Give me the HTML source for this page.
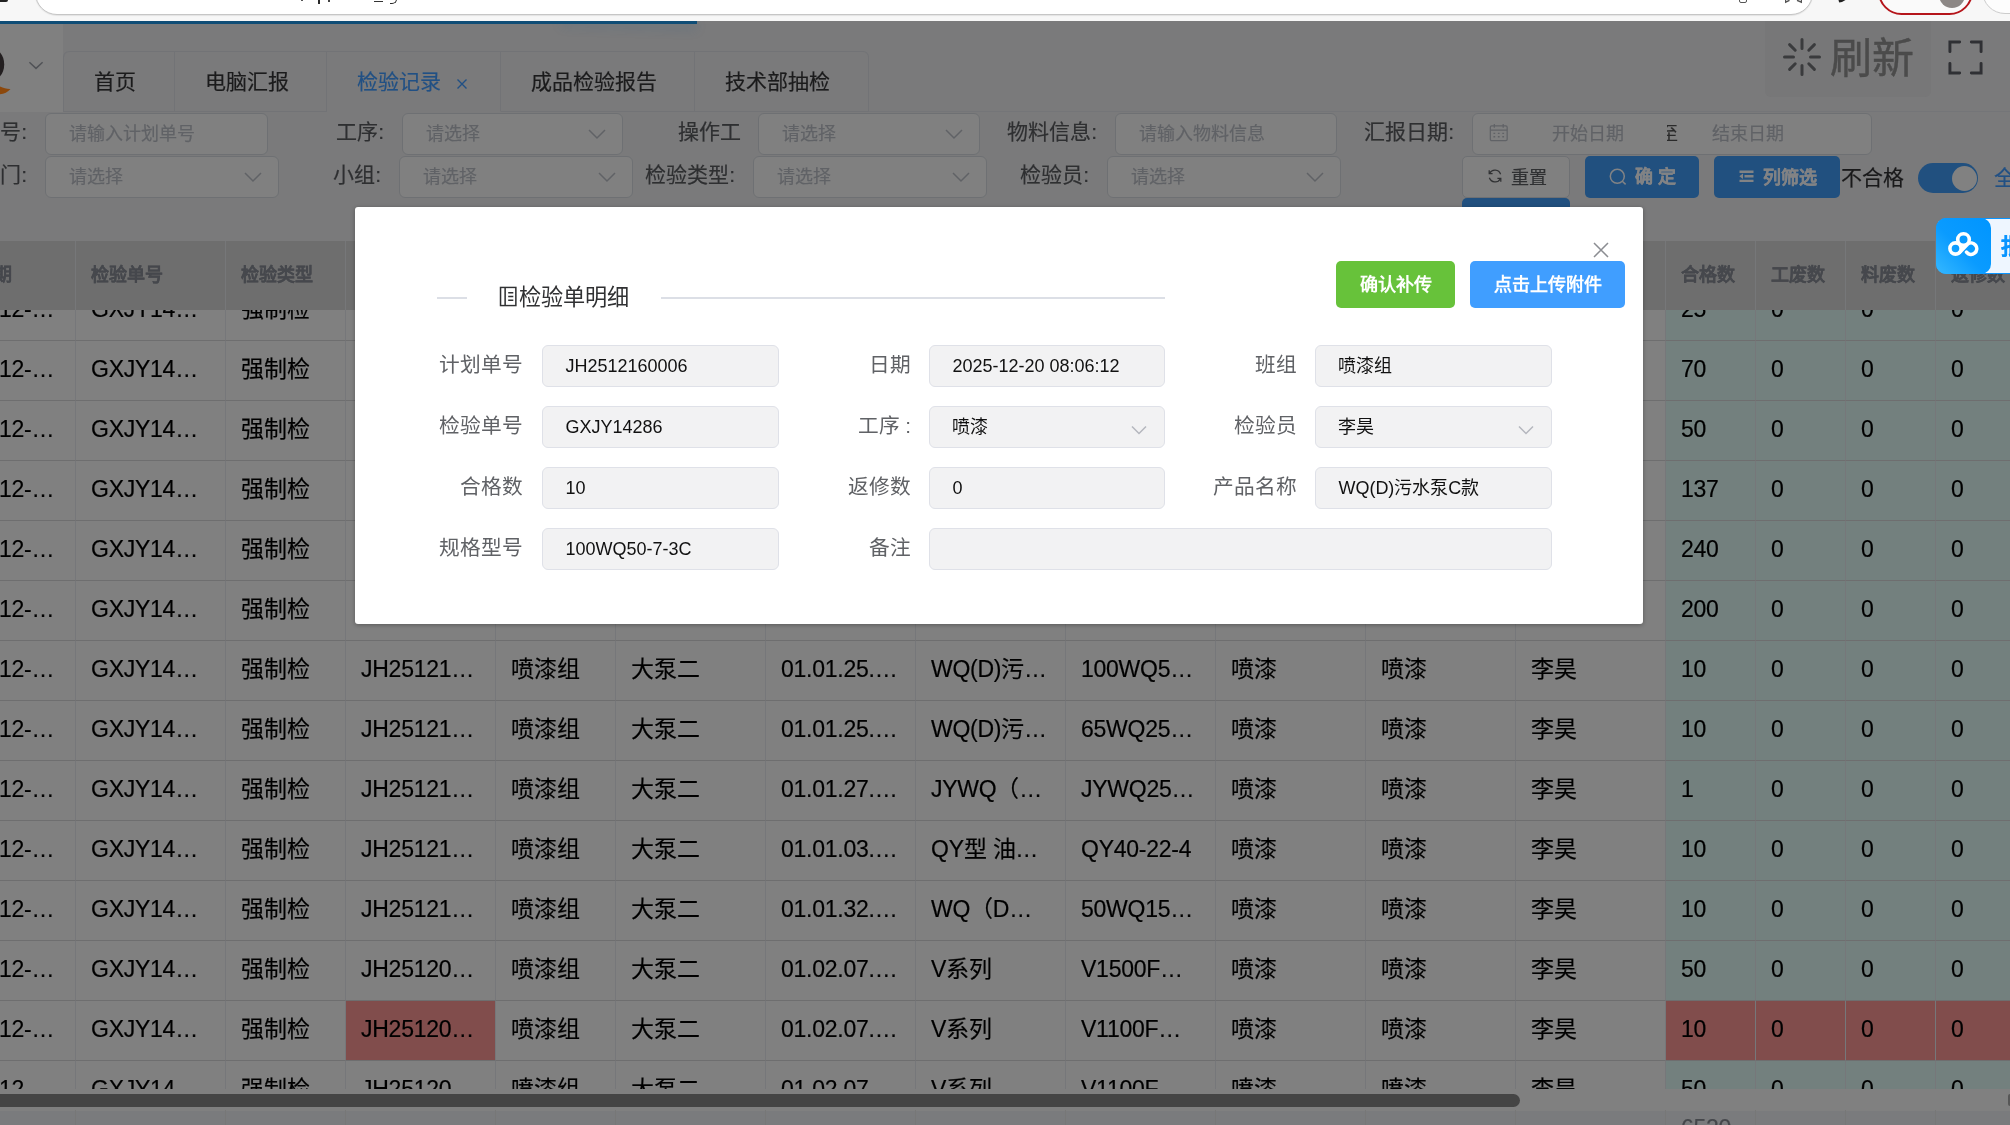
<!DOCTYPE html>
<html lang="zh-CN">
<head>
<meta charset="utf-8">
<title>检验记录</title>
<style>
*{box-sizing:border-box;margin:0;padding:0}
html,body{width:2010px;height:1125px;overflow:hidden;background:#7a7a7b}
body{font-family:"Liberation Sans",sans-serif;position:relative;color:#111;-webkit-text-stroke:0.18px}
#root{position:absolute;left:0;top:0;width:2010px;height:1125px;overflow:hidden;will-change:transform}
.abs{position:absolute}
.t{position:absolute;white-space:nowrap;line-height:1}
#chrome{left:0;top:0;width:2010px;height:21px;background:#f7f7f7;z-index:5;overflow:hidden}
#url{left:35px;top:-30px;width:1778px;height:44.5px;background:#fff;border:1.5px solid #c6c6c6;border-radius:22px;box-shadow:0 1px 1px rgba(0,0,0,.08)}
#prog{left:0;top:21px;width:697px;height:3px;background:#0f4d76;z-index:6}
#progend{left:560px;top:20px;width:134px;height:3px;box-shadow:2px 5px 11px rgba(50,100,140,.42);transform:rotate(1.5deg);transform-origin:100% 50%}
#side{left:0;top:24px;width:63px;height:88px;background:#808080}
.tab{position:absolute;top:51px;height:61px;border:1px solid #727376;border-left:none;font-size:21px;line-height:60px;text-align:left;padding-left:30px;color:#1b1b1c;white-space:nowrap}
.inp{position:absolute;height:41.5px;border:1px solid #6e7073;border-radius:6px;background:#808080}
.ph{position:absolute;font-size:18px;line-height:41px;color:#606266;white-space:nowrap;top:0}
.lab{position:absolute;font-size:21px;line-height:38px;color:#2e2f31;white-space:nowrap}
.chev{position:absolute;top:14px;width:18px;height:12px}
.th{position:absolute;top:241px;height:69px;background:#6e6e6e;border-right:1px solid #767779;font-size:18px;font-weight:bold;-webkit-text-stroke:0.12px #46484d;color:#46484d;line-height:68.6px;padding-left:15px;white-space:nowrap;overflow:hidden}
.td{position:absolute;height:60px;border-right:1px solid #76777a;border-bottom:1px solid #6e6e6f;font-size:23px;letter-spacing:-0.25px;line-height:57px;padding-left:15px;color:#000;white-space:nowrap;overflow:hidden}
.g{background:#73807e}
.r{background:#814d4c}
#dlg{-webkit-text-stroke:0;left:355px;top:207px;width:1288px;height:417px;background:#fff;border-radius:3px;box-shadow:0 1px 4px rgba(0,0,0,.3)}
.dl{position:absolute;font-size:20.7px;line-height:40px;color:#606266;white-space:nowrap;text-align:right;width:160px}
.di{position:absolute;height:42px;border:1px solid #dfe1e8;border-radius:6px;background:#f2f2f3;font-size:18px;line-height:40px;color:#111;padding-left:22.4px;white-space:nowrap;overflow:hidden}
.btn{position:absolute;border-radius:5px;color:#fff;font-weight:bold;font-size:18px;text-align:center;white-space:nowrap}
</style>
</head>
<body>
<div id="root">

<div id="chrome" class="abs">
<div id="url" class="abs"></div>
<div class="abs" style="left:301px;top:0;width:1.6px;height:1.2px;background:#555"></div>
<div class="abs" style="left:318px;top:0;width:2px;height:4px;background:#2a2a2a"></div>
<div class="abs" style="left:328px;top:0;width:1.8px;height:1.6px;background:#444"></div>
<div class="abs" style="left:374px;top:0.8px;width:9.3px;height:1.6px;background:#333"></div>
<div class="abs" style="left:389.5px;top:-3px;width:7px;height:6.6px;border:1.8px solid #2a2a2a;border-top:none;border-left:none;border-radius:0 0 5px 0"></div>
<div class="abs" style="left:0;top:0;width:8px;height:2px;background:#222;border-radius:0 0 3px 0"></div>
<div class="abs" style="left:1739px;top:-4px;width:8px;height:7px;border:1.5px solid #555;border-radius:2px"></div>
<svg class="abs" style="left:1785px;top:0" width="17" height="4" viewBox="0 0 17 4"><path d="M0.5 0V2.2L4.5 0.3M16.5 0V2.2L12 0.3" fill="none" stroke="#555" stroke-width="1.4"/></svg>
<svg class="abs" style="left:1838px;top:0" width="9" height="4" viewBox="0 0 9 4"><path d="M0.5 0L1.2 2.4L4 2L7.5 0Z" fill="#222"/></svg>
<div class="abs" style="left:1878px;top:-32px;width:94.5px;height:47px;border:2px solid #b5151b;border-radius:23.5px;background:#fafafa;overflow:hidden"><div class="abs" style="left:58.5px;top:10.5px;width:26.5px;height:27px;border-radius:13.5px;background:#8d8886"></div></div>
<div class="abs" style="left:1982px;top:-32px;width:94px;height:46px;border:1px solid #ccc;border-radius:23px;background:#fdfdfd"></div>
</div>
<div id="progend" class="abs"></div><div id="prog" class="abs"></div>
<div id="side" class="abs"></div>
<svg class="abs" style="left:0;top:48px" width="48" height="50" viewBox="0 0 48 50"><ellipse cx="-9.8" cy="16.4" rx="14" ry="16.7" fill="#231f20"/><path d="M0 38.6C3.5 40.4 7 41 10.5 40.9C8 44 4 46 0 46.2Z" fill="#8c480c"/><path d="M29.4 14.2L36 20.4L42.6 14.2" fill="none" stroke="#505256" stroke-width="1.45"/></svg>
<div class="abs" style="left:63px;top:51px;width:806px;height:61px;border-left:1px solid #727376;border-radius:6px 6px 0 0"></div>
<div class="tab" style="left:64px;width:111px;border-top-left-radius:6px;">首页</div>
<div class="tab" style="left:175px;width:152px;">电脑汇报</div>
<div class="tab" style="left:327px;width:174px;color:#215084;border-bottom-color:#7a7a7b">检验记录<svg style="position:absolute;left:128.7px;top:26px" width="12" height="12" viewBox="0 0 12 12"><path d="M1.5 1.5L10.5 10.5M10.5 1.5L1.5 10.5" stroke="#215084" stroke-width="1.4" fill="none"/></svg></div>
<div class="tab" style="left:501px;width:194px;">成品检验报告</div>
<div class="tab" style="left:695px;width:174px;border-top-right-radius:6px;">技术部抽检</div>
<div class="abs" style="left:869px;top:111px;width:1141px;height:1px;background:#747578"></div>
<div class="abs" style="left:1765px;top:14px;width:166px;height:82.5px;border-radius:6px;background:#777778"></div>
<svg class="abs" style="left:1782px;top:37px" width="40" height="40" viewBox="0 0 40 40"><g stroke="#3a3b3d" stroke-width="3" stroke-linecap="round">
<path d="M20 2.5V11.5M20 28.5V37.5M2.5 20H11.5M28.5 20H37.5M7.6 7.6L13.2 13.2M26.8 26.8L32.4 32.4M7.6 32.4L13.2 26.8M26.8 13.2L32.4 7.6"/></g></svg>
<div class="t" style="left:1830px;top:37.5px;font-size:42px;font-weight:500;-webkit-text-stroke:0.45px #4b4b4b;color:#4b4b4b">刷新</div>
<svg class="abs" style="left:1946.5px;top:38.5px" width="37" height="37" viewBox="0 0 38 38"><g stroke="#2f3034" stroke-width="3" fill="none" stroke-linecap="round" stroke-linejoin="miter">
<path d="M3 13V3H13M25 3H35V13M35 25V35H25M13 35H3V25"/></g></svg>
<div class="lab" style="right:1983px;top:113px">号:</div>
<div class="inp" style="left:45px;top:113px;width:223px"><span class="ph" style="left:23px">请输入计划单号</span></div>
<div class="lab" style="right:1626px;top:113px">工序:</div>
<div class="inp" style="left:402px;top:113px;width:221px"><span class="ph" style="left:23px">请选择</span><svg class="chev" style="left:185px" viewBox="0 0 18 12"><path d="M1 2L9 10L17 2" fill="none" stroke="#606266" stroke-width="1.5"/></svg></div>
<div class="lab" style="right:1269px;top:113px">操作工</div>
<div class="inp" style="left:758px;top:113px;width:222px"><span class="ph" style="left:23px">请选择</span><svg class="chev" style="left:186px" viewBox="0 0 18 12"><path d="M1 2L9 10L17 2" fill="none" stroke="#606266" stroke-width="1.5"/></svg></div>
<div class="lab" style="right:913px;top:113px">物料信息:</div>
<div class="inp" style="left:1115px;top:113px;width:222px"><span class="ph" style="left:23px">请输入物料信息</span></div>
<div class="lab" style="right:556px;top:113px">汇报日期:</div>
<div class="inp" style="left:1472px;top:113px;width:400px"><svg style="position:absolute;left:16px;top:9px" width="19.5" height="19" viewBox="0 0 22 20" preserveAspectRatio="none"><g fill="none" stroke="#606266" stroke-width="1.4"><rect x="1.5" y="3" width="19" height="15.5" rx="1.5"/><path d="M1.5 7.5H20.5M6 1V5M16 1V5M5 11H7M10 11H12M15 11H17M5 14.5H7M10 14.5H12M15 14.5H17"/></g></svg><span class="ph" style="left:79px">开始日期</span><span class="abs" style="left:194px;top:10px;width:12px;height:21px;overflow:hidden"><span class="t" style="left:-7px;top:0;font-size:18px;line-height:21px;color:#2a2a2a">至</span></span><span class="ph" style="left:239px">结束日期</span></div>
<div class="lab" style="right:1983px;top:156px">门:</div>
<div class="inp" style="left:45px;top:156px;width:234px"><span class="ph" style="left:23px">请选择</span><svg class="chev" style="left:198px" viewBox="0 0 18 12"><path d="M1 2L9 10L17 2" fill="none" stroke="#606266" stroke-width="1.5"/></svg></div>
<div class="lab" style="right:1629px;top:156px">小组:</div>
<div class="inp" style="left:399px;top:156px;width:234px"><span class="ph" style="left:23px">请选择</span><svg class="chev" style="left:198px" viewBox="0 0 18 12"><path d="M1 2L9 10L17 2" fill="none" stroke="#606266" stroke-width="1.5"/></svg></div>
<div class="lab" style="right:1275px;top:156px">检验类型:</div>
<div class="inp" style="left:753px;top:156px;width:234px"><span class="ph" style="left:23px">请选择</span><svg class="chev" style="left:198px" viewBox="0 0 18 12"><path d="M1 2L9 10L17 2" fill="none" stroke="#606266" stroke-width="1.5"/></svg></div>
<div class="lab" style="right:921px;top:156px">检验员:</div>
<div class="inp" style="left:1107px;top:156px;width:234px"><span class="ph" style="left:23px">请选择</span><svg class="chev" style="left:198px" viewBox="0 0 18 12"><path d="M1 2L9 10L17 2" fill="none" stroke="#606266" stroke-width="1.5"/></svg></div>
<div class="abs" style="left:1462px;top:156px;width:108px;height:41.5px;border:1px solid #6e7073;border-radius:5px;background:#808080"><svg style="position:absolute;left:23.5px;top:11.3px" width="16" height="16" viewBox="0 0 16 16"><g fill="none" stroke="#303133" stroke-width="1.25"><path d="M13.6 6.2A6 6 0 0 0 2.6 5.2M2.4 9.8A6 6 0 0 0 13.4 10.8"/><path d="M2.2 2.2V5.6H5.6M13.8 13.8V10.4H10.4"/></g></svg><span class="t" style="left:48px;top:11.5px;font-size:18px;font-weight:500;color:#2f3032">重置</span></div>
<div class="abs" style="left:1462px;top:198px;width:108px;height:30px;border-radius:5px;background:#21507f"></div>
<div class="abs" style="left:1585px;top:156px;width:114px;height:42px;border-radius:5px;background:#21507f"><svg style="position:absolute;left:23px;top:11px" width="20" height="20" viewBox="0 0 20 20"><g fill="none" stroke="#828385" stroke-width="1.5"><circle cx="9.3" cy="9.3" r="7"/><path d="M14.3 14.3L17.6 17.4"/></g></svg><span class="t" style="left:49.5px;top:12px;font-size:18px;font-weight:bold;color:#828385">确 定</span></div>
<div class="abs" style="left:1714px;top:156px;width:126px;height:42px;border-radius:5px;background:#21507f"><svg style="position:absolute;left:25px;top:14px" width="15" height="13" viewBox="0 0 15 13"><g fill="none" stroke="#828385" stroke-width="2.4"><path d="M0.5 1.7H14.5M5.5 6.3H14.5M0.5 10.9H14.5"/></g><path d="M0.3 6.3L4 3.6V9Z" fill="#828385"/></svg><span class="t" style="left:49px;top:12.5px;font-size:18px;font-weight:bold;color:#828385">列筛选</span></div>
<div class="t" style="left:1841px;top:167px;font-size:21px;color:#19191a">不合格</div>
<div class="abs" style="left:1918px;top:163px;width:60px;height:30px;border-radius:15px;background:#21507f"><div class="abs" style="left:33.5px;top:2.5px;width:25px;height:25px;border-radius:13px;background:#818181"></div></div>
<div class="t" style="left:1993.5px;top:166.5px;font-size:21px;color:#215084">全部</div>
<div class="abs" style="left:0;top:241px;width:2010px;height:884px;background:#808080"></div>
<div class="td" style="left:0;top:281px;width:76px;padding-left:0;text-indent:-1px">12-…</div>
<div class="td" style="left:76px;top:281px;width:150px">GXJY14…</div>
<div class="td" style="left:226px;top:281px;width:120px">强制检</div>
<div class="td" style="left:346px;top:281px;width:150px">JH25121…</div>
<div class="td" style="left:496px;top:281px;width:120px">喷漆组</div>
<div class="td" style="left:616px;top:281px;width:150px">大泵二</div>
<div class="td" style="left:766px;top:281px;width:150px">01.01.25.…</div>
<div class="td" style="left:916px;top:281px;width:150px">WQ(D)污…</div>
<div class="td" style="left:1066px;top:281px;width:150px">100WQ5…</div>
<div class="td" style="left:1216px;top:281px;width:150px">喷漆</div>
<div class="td" style="left:1366px;top:281px;width:150px">喷漆</div>
<div class="td" style="left:1516px;top:281px;width:150px">李昊</div>
<div class="td g" style="left:1666px;top:281px;width:90px">25</div>
<div class="td g" style="left:1756px;top:281px;width:90px">0</div>
<div class="td g" style="left:1846px;top:281px;width:90px">0</div>
<div class="td g" style="left:1936px;top:281px;width:90px">0</div>
<div class="td" style="left:0;top:341px;width:76px;padding-left:0;text-indent:-1px">12-…</div>
<div class="td" style="left:76px;top:341px;width:150px">GXJY14…</div>
<div class="td" style="left:226px;top:341px;width:120px">强制检</div>
<div class="td" style="left:346px;top:341px;width:150px">JH25121…</div>
<div class="td" style="left:496px;top:341px;width:120px">喷漆组</div>
<div class="td" style="left:616px;top:341px;width:150px">大泵二</div>
<div class="td" style="left:766px;top:341px;width:150px">01.01.25.…</div>
<div class="td" style="left:916px;top:341px;width:150px">WQ(D)污…</div>
<div class="td" style="left:1066px;top:341px;width:150px">100WQ5…</div>
<div class="td" style="left:1216px;top:341px;width:150px">喷漆</div>
<div class="td" style="left:1366px;top:341px;width:150px">喷漆</div>
<div class="td" style="left:1516px;top:341px;width:150px">李昊</div>
<div class="td g" style="left:1666px;top:341px;width:90px">70</div>
<div class="td g" style="left:1756px;top:341px;width:90px">0</div>
<div class="td g" style="left:1846px;top:341px;width:90px">0</div>
<div class="td g" style="left:1936px;top:341px;width:90px">0</div>
<div class="td" style="left:0;top:401px;width:76px;padding-left:0;text-indent:-1px">12-…</div>
<div class="td" style="left:76px;top:401px;width:150px">GXJY14…</div>
<div class="td" style="left:226px;top:401px;width:120px">强制检</div>
<div class="td" style="left:346px;top:401px;width:150px">JH25121…</div>
<div class="td" style="left:496px;top:401px;width:120px">喷漆组</div>
<div class="td" style="left:616px;top:401px;width:150px">大泵二</div>
<div class="td" style="left:766px;top:401px;width:150px">01.01.25.…</div>
<div class="td" style="left:916px;top:401px;width:150px">WQ(D)污…</div>
<div class="td" style="left:1066px;top:401px;width:150px">100WQ5…</div>
<div class="td" style="left:1216px;top:401px;width:150px">喷漆</div>
<div class="td" style="left:1366px;top:401px;width:150px">喷漆</div>
<div class="td" style="left:1516px;top:401px;width:150px">李昊</div>
<div class="td g" style="left:1666px;top:401px;width:90px">50</div>
<div class="td g" style="left:1756px;top:401px;width:90px">0</div>
<div class="td g" style="left:1846px;top:401px;width:90px">0</div>
<div class="td g" style="left:1936px;top:401px;width:90px">0</div>
<div class="td" style="left:0;top:461px;width:76px;padding-left:0;text-indent:-1px">12-…</div>
<div class="td" style="left:76px;top:461px;width:150px">GXJY14…</div>
<div class="td" style="left:226px;top:461px;width:120px">强制检</div>
<div class="td" style="left:346px;top:461px;width:150px">JH25121…</div>
<div class="td" style="left:496px;top:461px;width:120px">喷漆组</div>
<div class="td" style="left:616px;top:461px;width:150px">大泵二</div>
<div class="td" style="left:766px;top:461px;width:150px">01.01.25.…</div>
<div class="td" style="left:916px;top:461px;width:150px">WQ(D)污…</div>
<div class="td" style="left:1066px;top:461px;width:150px">100WQ5…</div>
<div class="td" style="left:1216px;top:461px;width:150px">喷漆</div>
<div class="td" style="left:1366px;top:461px;width:150px">喷漆</div>
<div class="td" style="left:1516px;top:461px;width:150px">李昊</div>
<div class="td g" style="left:1666px;top:461px;width:90px">137</div>
<div class="td g" style="left:1756px;top:461px;width:90px">0</div>
<div class="td g" style="left:1846px;top:461px;width:90px">0</div>
<div class="td g" style="left:1936px;top:461px;width:90px">0</div>
<div class="td" style="left:0;top:521px;width:76px;padding-left:0;text-indent:-1px">12-…</div>
<div class="td" style="left:76px;top:521px;width:150px">GXJY14…</div>
<div class="td" style="left:226px;top:521px;width:120px">强制检</div>
<div class="td" style="left:346px;top:521px;width:150px">JH25121…</div>
<div class="td" style="left:496px;top:521px;width:120px">喷漆组</div>
<div class="td" style="left:616px;top:521px;width:150px">大泵二</div>
<div class="td" style="left:766px;top:521px;width:150px">01.01.25.…</div>
<div class="td" style="left:916px;top:521px;width:150px">WQ(D)污…</div>
<div class="td" style="left:1066px;top:521px;width:150px">100WQ5…</div>
<div class="td" style="left:1216px;top:521px;width:150px">喷漆</div>
<div class="td" style="left:1366px;top:521px;width:150px">喷漆</div>
<div class="td" style="left:1516px;top:521px;width:150px">李昊</div>
<div class="td g" style="left:1666px;top:521px;width:90px">240</div>
<div class="td g" style="left:1756px;top:521px;width:90px">0</div>
<div class="td g" style="left:1846px;top:521px;width:90px">0</div>
<div class="td g" style="left:1936px;top:521px;width:90px">0</div>
<div class="td" style="left:0;top:581px;width:76px;padding-left:0;text-indent:-1px">12-…</div>
<div class="td" style="left:76px;top:581px;width:150px">GXJY14…</div>
<div class="td" style="left:226px;top:581px;width:120px">强制检</div>
<div class="td" style="left:346px;top:581px;width:150px">JH25121…</div>
<div class="td" style="left:496px;top:581px;width:120px">喷漆组</div>
<div class="td" style="left:616px;top:581px;width:150px">大泵二</div>
<div class="td" style="left:766px;top:581px;width:150px">01.01.25.…</div>
<div class="td" style="left:916px;top:581px;width:150px">WQ(D)污…</div>
<div class="td" style="left:1066px;top:581px;width:150px">100WQ5…</div>
<div class="td" style="left:1216px;top:581px;width:150px">喷漆</div>
<div class="td" style="left:1366px;top:581px;width:150px">喷漆</div>
<div class="td" style="left:1516px;top:581px;width:150px">李昊</div>
<div class="td g" style="left:1666px;top:581px;width:90px">200</div>
<div class="td g" style="left:1756px;top:581px;width:90px">0</div>
<div class="td g" style="left:1846px;top:581px;width:90px">0</div>
<div class="td g" style="left:1936px;top:581px;width:90px">0</div>
<div class="td" style="left:0;top:641px;width:76px;padding-left:0;text-indent:-1px">12-…</div>
<div class="td" style="left:76px;top:641px;width:150px">GXJY14…</div>
<div class="td" style="left:226px;top:641px;width:120px">强制检</div>
<div class="td" style="left:346px;top:641px;width:150px">JH25121…</div>
<div class="td" style="left:496px;top:641px;width:120px">喷漆组</div>
<div class="td" style="left:616px;top:641px;width:150px">大泵二</div>
<div class="td" style="left:766px;top:641px;width:150px">01.01.25.…</div>
<div class="td" style="left:916px;top:641px;width:150px">WQ(D)污…</div>
<div class="td" style="left:1066px;top:641px;width:150px">100WQ5…</div>
<div class="td" style="left:1216px;top:641px;width:150px">喷漆</div>
<div class="td" style="left:1366px;top:641px;width:150px">喷漆</div>
<div class="td" style="left:1516px;top:641px;width:150px">李昊</div>
<div class="td g" style="left:1666px;top:641px;width:90px">10</div>
<div class="td g" style="left:1756px;top:641px;width:90px">0</div>
<div class="td g" style="left:1846px;top:641px;width:90px">0</div>
<div class="td g" style="left:1936px;top:641px;width:90px">0</div>
<div class="td" style="left:0;top:701px;width:76px;padding-left:0;text-indent:-1px">12-…</div>
<div class="td" style="left:76px;top:701px;width:150px">GXJY14…</div>
<div class="td" style="left:226px;top:701px;width:120px">强制检</div>
<div class="td" style="left:346px;top:701px;width:150px">JH25121…</div>
<div class="td" style="left:496px;top:701px;width:120px">喷漆组</div>
<div class="td" style="left:616px;top:701px;width:150px">大泵二</div>
<div class="td" style="left:766px;top:701px;width:150px">01.01.25.…</div>
<div class="td" style="left:916px;top:701px;width:150px">WQ(D)污…</div>
<div class="td" style="left:1066px;top:701px;width:150px">65WQ25…</div>
<div class="td" style="left:1216px;top:701px;width:150px">喷漆</div>
<div class="td" style="left:1366px;top:701px;width:150px">喷漆</div>
<div class="td" style="left:1516px;top:701px;width:150px">李昊</div>
<div class="td g" style="left:1666px;top:701px;width:90px">10</div>
<div class="td g" style="left:1756px;top:701px;width:90px">0</div>
<div class="td g" style="left:1846px;top:701px;width:90px">0</div>
<div class="td g" style="left:1936px;top:701px;width:90px">0</div>
<div class="td" style="left:0;top:761px;width:76px;padding-left:0;text-indent:-1px">12-…</div>
<div class="td" style="left:76px;top:761px;width:150px">GXJY14…</div>
<div class="td" style="left:226px;top:761px;width:120px">强制检</div>
<div class="td" style="left:346px;top:761px;width:150px">JH25121…</div>
<div class="td" style="left:496px;top:761px;width:120px">喷漆组</div>
<div class="td" style="left:616px;top:761px;width:150px">大泵二</div>
<div class="td" style="left:766px;top:761px;width:150px">01.01.27.…</div>
<div class="td" style="left:916px;top:761px;width:150px">JYWQ（…</div>
<div class="td" style="left:1066px;top:761px;width:150px">JYWQ25…</div>
<div class="td" style="left:1216px;top:761px;width:150px">喷漆</div>
<div class="td" style="left:1366px;top:761px;width:150px">喷漆</div>
<div class="td" style="left:1516px;top:761px;width:150px">李昊</div>
<div class="td g" style="left:1666px;top:761px;width:90px">1</div>
<div class="td g" style="left:1756px;top:761px;width:90px">0</div>
<div class="td g" style="left:1846px;top:761px;width:90px">0</div>
<div class="td g" style="left:1936px;top:761px;width:90px">0</div>
<div class="td" style="left:0;top:821px;width:76px;padding-left:0;text-indent:-1px">12-…</div>
<div class="td" style="left:76px;top:821px;width:150px">GXJY14…</div>
<div class="td" style="left:226px;top:821px;width:120px">强制检</div>
<div class="td" style="left:346px;top:821px;width:150px">JH25121…</div>
<div class="td" style="left:496px;top:821px;width:120px">喷漆组</div>
<div class="td" style="left:616px;top:821px;width:150px">大泵二</div>
<div class="td" style="left:766px;top:821px;width:150px">01.01.03.…</div>
<div class="td" style="left:916px;top:821px;width:150px">QY型 油…</div>
<div class="td" style="left:1066px;top:821px;width:150px">QY40-22-4</div>
<div class="td" style="left:1216px;top:821px;width:150px">喷漆</div>
<div class="td" style="left:1366px;top:821px;width:150px">喷漆</div>
<div class="td" style="left:1516px;top:821px;width:150px">李昊</div>
<div class="td g" style="left:1666px;top:821px;width:90px">10</div>
<div class="td g" style="left:1756px;top:821px;width:90px">0</div>
<div class="td g" style="left:1846px;top:821px;width:90px">0</div>
<div class="td g" style="left:1936px;top:821px;width:90px">0</div>
<div class="td" style="left:0;top:881px;width:76px;padding-left:0;text-indent:-1px">12-…</div>
<div class="td" style="left:76px;top:881px;width:150px">GXJY14…</div>
<div class="td" style="left:226px;top:881px;width:120px">强制检</div>
<div class="td" style="left:346px;top:881px;width:150px">JH25121…</div>
<div class="td" style="left:496px;top:881px;width:120px">喷漆组</div>
<div class="td" style="left:616px;top:881px;width:150px">大泵二</div>
<div class="td" style="left:766px;top:881px;width:150px">01.01.32.…</div>
<div class="td" style="left:916px;top:881px;width:150px">WQ（D…</div>
<div class="td" style="left:1066px;top:881px;width:150px">50WQ15…</div>
<div class="td" style="left:1216px;top:881px;width:150px">喷漆</div>
<div class="td" style="left:1366px;top:881px;width:150px">喷漆</div>
<div class="td" style="left:1516px;top:881px;width:150px">李昊</div>
<div class="td g" style="left:1666px;top:881px;width:90px">10</div>
<div class="td g" style="left:1756px;top:881px;width:90px">0</div>
<div class="td g" style="left:1846px;top:881px;width:90px">0</div>
<div class="td g" style="left:1936px;top:881px;width:90px">0</div>
<div class="td" style="left:0;top:941px;width:76px;padding-left:0;text-indent:-1px">12-…</div>
<div class="td" style="left:76px;top:941px;width:150px">GXJY14…</div>
<div class="td" style="left:226px;top:941px;width:120px">强制检</div>
<div class="td" style="left:346px;top:941px;width:150px">JH25120…</div>
<div class="td" style="left:496px;top:941px;width:120px">喷漆组</div>
<div class="td" style="left:616px;top:941px;width:150px">大泵二</div>
<div class="td" style="left:766px;top:941px;width:150px">01.02.07.…</div>
<div class="td" style="left:916px;top:941px;width:150px">V系列</div>
<div class="td" style="left:1066px;top:941px;width:150px">V1500F…</div>
<div class="td" style="left:1216px;top:941px;width:150px">喷漆</div>
<div class="td" style="left:1366px;top:941px;width:150px">喷漆</div>
<div class="td" style="left:1516px;top:941px;width:150px">李昊</div>
<div class="td g" style="left:1666px;top:941px;width:90px">50</div>
<div class="td g" style="left:1756px;top:941px;width:90px">0</div>
<div class="td g" style="left:1846px;top:941px;width:90px">0</div>
<div class="td g" style="left:1936px;top:941px;width:90px">0</div>
<div class="td" style="left:0;top:1001px;width:76px;padding-left:0;text-indent:-1px">12-…</div>
<div class="td" style="left:76px;top:1001px;width:150px">GXJY14…</div>
<div class="td" style="left:226px;top:1001px;width:120px">强制检</div>
<div class="td r" style="left:346px;top:1001px;width:150px">JH25120…</div>
<div class="td" style="left:496px;top:1001px;width:120px">喷漆组</div>
<div class="td" style="left:616px;top:1001px;width:150px">大泵二</div>
<div class="td" style="left:766px;top:1001px;width:150px">01.02.07.…</div>
<div class="td" style="left:916px;top:1001px;width:150px">V系列</div>
<div class="td" style="left:1066px;top:1001px;width:150px">V1100F…</div>
<div class="td" style="left:1216px;top:1001px;width:150px">喷漆</div>
<div class="td" style="left:1366px;top:1001px;width:150px">喷漆</div>
<div class="td" style="left:1516px;top:1001px;width:150px">李昊</div>
<div class="td r" style="left:1666px;top:1001px;width:90px">10</div>
<div class="td r" style="left:1756px;top:1001px;width:90px">0</div>
<div class="td r" style="left:1846px;top:1001px;width:90px">0</div>
<div class="td r" style="left:1936px;top:1001px;width:90px">0</div>
<div class="td" style="left:0;top:1061px;width:76px;padding-left:0;text-indent:-1px">12-…</div>
<div class="td" style="left:76px;top:1061px;width:150px">GXJY14…</div>
<div class="td" style="left:226px;top:1061px;width:120px">强制检</div>
<div class="td" style="left:346px;top:1061px;width:150px">JH25120…</div>
<div class="td" style="left:496px;top:1061px;width:120px">喷漆组</div>
<div class="td" style="left:616px;top:1061px;width:150px">大泵二</div>
<div class="td" style="left:766px;top:1061px;width:150px">01.02.07.…</div>
<div class="td" style="left:916px;top:1061px;width:150px">V系列</div>
<div class="td" style="left:1066px;top:1061px;width:150px">V1100F…</div>
<div class="td" style="left:1216px;top:1061px;width:150px">喷漆</div>
<div class="td" style="left:1366px;top:1061px;width:150px">喷漆</div>
<div class="td" style="left:1516px;top:1061px;width:150px">李昊</div>
<div class="td g" style="left:1666px;top:1061px;width:90px">50</div>
<div class="td g" style="left:1756px;top:1061px;width:90px">0</div>
<div class="td g" style="left:1846px;top:1061px;width:90px">0</div>
<div class="td g" style="left:1936px;top:1061px;width:90px">0</div>
<div class="th" style="left:0;width:76px;padding-left:0"><span style="margin-left:-6px">期</span></div>
<div class="th" style="left:76px;width:150px">检验单号</div>
<div class="th" style="left:226px;width:120px">检验类型</div>
<div class="th" style="left:346px;width:150px">计划单号</div>
<div class="th" style="left:496px;width:120px">班组</div>
<div class="th" style="left:616px;width:150px">小组</div>
<div class="th" style="left:766px;width:150px">物料编码</div>
<div class="th" style="left:916px;width:150px">产品名称</div>
<div class="th" style="left:1066px;width:150px">规格型号</div>
<div class="th" style="left:1216px;width:150px">工序</div>
<div class="th" style="left:1366px;width:150px">上工序</div>
<div class="th" style="left:1516px;width:150px">检验员</div>
<div class="th" style="left:1666px;width:90px">合格数</div>
<div class="th" style="left:1756px;width:90px">工废数</div>
<div class="th" style="left:1846px;width:90px">料废数</div>
<div class="th" style="left:1936px;width:90px">返修数</div>
<div class="abs" style="left:0;top:1088.5px;width:2010px;height:22px;background:#808080"></div>
<div class="abs" style="left:-20px;top:1094px;width:1540px;height:13px;border-radius:7px;background:#454545"></div>
<div class="abs" style="left:2007.5px;top:1094px;width:6px;height:12px;border-radius:2px;background:#565656"></div>
<div class="abs" style="left:0;top:1111px;width:2010px;height:15px;background:#7a7b7d"></div>
<div class="abs" style="left:75px;top:1110px;width:1px;height:15px;background:#777"></div>
<div class="abs" style="left:225px;top:1110px;width:1px;height:15px;background:#777"></div>
<div class="abs" style="left:345px;top:1110px;width:1px;height:15px;background:#777"></div>
<div class="abs" style="left:495px;top:1110px;width:1px;height:15px;background:#777"></div>
<div class="abs" style="left:615px;top:1110px;width:1px;height:15px;background:#777"></div>
<div class="abs" style="left:765px;top:1110px;width:1px;height:15px;background:#777"></div>
<div class="abs" style="left:915px;top:1110px;width:1px;height:15px;background:#777"></div>
<div class="abs" style="left:1065px;top:1110px;width:1px;height:15px;background:#777"></div>
<div class="abs" style="left:1215px;top:1110px;width:1px;height:15px;background:#777"></div>
<div class="abs" style="left:1365px;top:1110px;width:1px;height:15px;background:#777"></div>
<div class="abs" style="left:1515px;top:1110px;width:1px;height:15px;background:#777"></div>
<div class="abs" style="left:1665px;top:1110px;width:1px;height:15px;background:#777"></div>
<div class="abs" style="left:1755px;top:1110px;width:1px;height:15px;background:#777"></div>
<div class="abs" style="left:1845px;top:1110px;width:1px;height:15px;background:#777"></div>
<div class="abs" style="left:1935px;top:1110px;width:1px;height:15px;background:#777"></div>
<div class="t" style="left:1681px;top:1116.5px;font-size:23px;letter-spacing:-0.25px;color:#45474b">6520</div>
<div class="abs" style="left:1936px;top:218px;width:120px;height:56px;border-radius:10px;background:#eef6ff;border:1.5px solid #0a95ff"></div>
<div class="abs" style="left:1936px;top:218px;width:55px;height:56px;border-radius:10px;background:linear-gradient(45deg,#35b8ff 0%,#0a9bff 45%,#0095ff 100%)"></div>
<svg class="abs" style="left:1945px;top:228px" width="38" height="32" viewBox="0 0 38 32"><g fill="none" stroke="#fff" stroke-width="3.6" stroke-linecap="round">
<circle cx="18.5" cy="11.5" r="5.8"/><circle cx="10.5" cy="20.5" r="5.6"/>
<path d="M21.5 24.2A5.7 5.7 0 1 0 22.5 16.2L14.5 24.5"/></g></svg>
<div class="t" style="left:2001px;top:236px;font-size:22px;font-weight:bold;color:#0a95ff">批</div>
<div id="dlg" class="abs">
<svg class="abs" style="left:1237px;top:34px" width="18" height="18" viewBox="0 0 18 18"><path d="M2 2L16 16M16 2L2 16" stroke="#8b8d92" stroke-width="1.5" fill="none"/></svg>
<div class="abs" style="left:82px;top:90px;width:30px;height:1.5px;background:#dcdfe6"></div>
<div class="abs" style="left:306px;top:90px;width:504px;height:1.5px;background:#dcdfe6"></div>
<svg class="abs" style="left:143.60000000000002px;top:79.30000000000001px" width="18.4" height="21" viewBox="0 0 18 22" preserveAspectRatio="none"><g fill="none" stroke="#303133" stroke-width="1.5"><rect x="1.5" y="1.5" width="15" height="19"/><path d="M6 1.5V20.5M9 7H14M9 11H14M9 15H14"/></g></svg>
<div class="t" style="left:164px;top:79.5px;font-size:22.2px;color:#303133">检验单明细</div>
<div class="btn" style="left:981px;top:54px;width:119px;height:47px;line-height:49px;background:#67c23a">确认补传</div>
<div class="btn" style="left:1115px;top:54px;width:155px;height:47px;line-height:49px;background:#409eff">点击上传附件</div>
<div class="dl" style="left:8px;top:138px">计划单号</div>
<div class="di" style="left:187px;top:138px;width:237px">JH2512160006</div>
<div class="dl" style="left:396px;top:138px">日期</div>
<div class="di" style="left:574px;top:138px;width:236px">2025-12-20 08:06:12</div>
<div class="dl" style="left:782px;top:138px">班组</div>
<div class="di" style="left:960px;top:138px;width:237px">喷漆组</div>
<div class="dl" style="left:8px;top:199px">检验单号</div>
<div class="di" style="left:187px;top:199px;width:237px">GXJY14286</div>
<div class="dl" style="left:396px;top:199px">工序 :</div>
<div class="di" style="left:574px;top:199px;width:236px">喷漆<svg style="position:absolute;left:201px;top:17.3px" width="16" height="12" viewBox="0 0 16 12"><path d="M1 2.5L8 9.5L15 2.5" fill="none" stroke="#b4b7be" stroke-width="1.5"/></svg></div>
<div class="dl" style="left:782px;top:199px">检验员</div>
<div class="di" style="left:960px;top:199px;width:237px">李昊<svg style="position:absolute;left:202px;top:17.3px" width="16" height="12" viewBox="0 0 16 12"><path d="M1 2.5L8 9.5L15 2.5" fill="none" stroke="#b4b7be" stroke-width="1.5"/></svg></div>
<div class="dl" style="left:8px;top:260px">合格数</div>
<div class="di" style="left:187px;top:260px;width:237px">10</div>
<div class="dl" style="left:396px;top:260px">返修数</div>
<div class="di" style="left:574px;top:260px;width:236px">0</div>
<div class="dl" style="left:782px;top:260px">产品名称</div>
<div class="di" style="left:960px;top:260px;width:237px">WQ(D)污水泵C款</div>
<div class="dl" style="left:8px;top:321px">规格型号</div>
<div class="di" style="left:187px;top:321px;width:237px">100WQ50-7-3C</div>
<div class="dl" style="left:396px;top:321px">备注</div>
<div class="di" style="left:574px;top:321px;width:623px"></div>
</div>
</div>
</body></html>
